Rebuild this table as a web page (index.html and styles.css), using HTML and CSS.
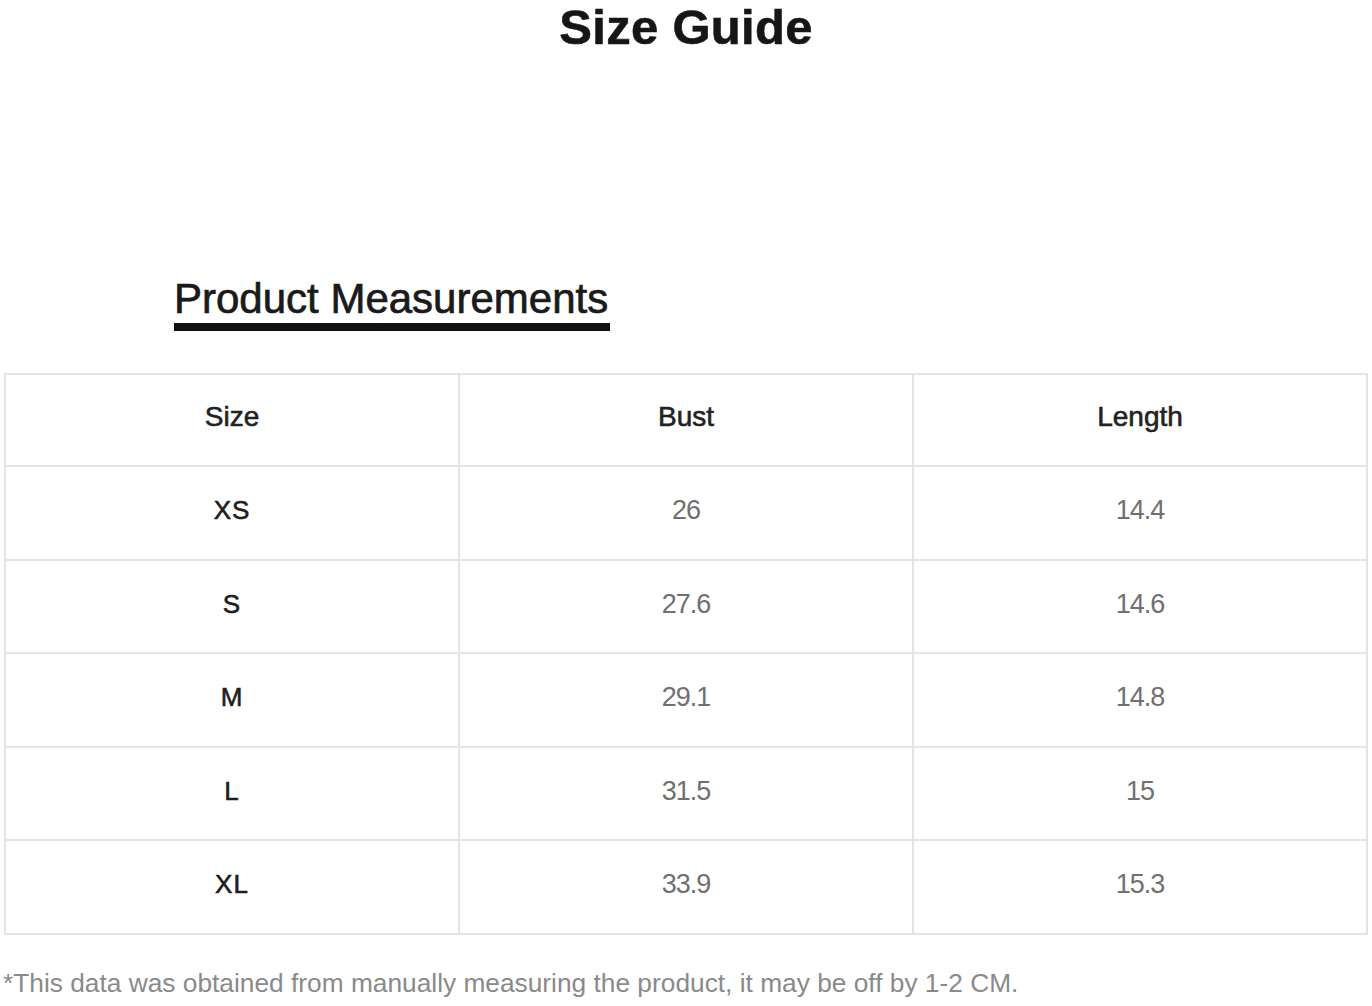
FILE: index.html
```html
<!DOCTYPE html>
<html lang="en">
<head>
<meta charset="utf-8">
<title>Size Guide</title>
<link rel="stylesheet" href="styles.css">
</head>
<body>
<main class="page">
  <h1 class="title">Size Guide</h1>
  <div class="section-head">
    <h2 class="subtitle">Product Measurements</h2>
  </div>
  <table class="sizes">
    <thead>
      <tr><th>Size</th><th>Bust</th><th>Length</th></tr>
    </thead>
    <tbody>
      <tr><td class="size">XS</td><td>26</td><td>14.4</td></tr>
      <tr><td class="size">S</td><td>27.6</td><td>14.6</td></tr>
      <tr><td class="size">M</td><td>29.1</td><td>14.8</td></tr>
      <tr><td class="size">L</td><td>31.5</td><td>15</td></tr>
      <tr><td class="size">XL</td><td>33.9</td><td>15.3</td></tr>
    </tbody>
  </table>
  <p class="note">*This data was obtained from manually measuring the product, it may be off by 1-2 CM.</p>
</main>
</body>
</html>
```

FILE: styles.css
```css
html, body {
  margin: 0;
  padding: 0;
  background: #ffffff;
}

.page {
  width: 1372px;
  font-family: "Liberation Sans", Arial, sans-serif;
}

.title {
  margin: 0;
  text-align: center;
  font-size: 49px;
  line-height: 54px;
  font-weight: 700;
  color: #161616;
  -webkit-text-stroke: 0.6px #161616;
  letter-spacing: 0.3px;
}

.section-head {
  margin-top: 222px;
  padding-left: 174px;
}

.subtitle {
  display: inline-block;
  margin: 0;
  font-size: 42px;
  line-height: 46px;
  font-weight: 400;
  color: #1a1a1a;
  -webkit-text-stroke: 0.7px #1a1a1a;
  padding-bottom: 1px;
  border-bottom: 8px solid #111111;
  padding-right: 2px;
}

.sizes {
  margin-top: 42px;
  margin-left: 4px;
  width: 1364px;
  border-collapse: collapse;
  table-layout: fixed;
}

.sizes th,
.sizes td {
  border: 2px solid #e4e4e4;
  padding: 0;
  text-align: center;
  vertical-align: middle;
  font-size: 27px;
}

.sizes th {
  height: 84px;
  padding-bottom: 6px;
  font-weight: 400;
  color: #222222;
  -webkit-text-stroke: 0.6px #222222;
  font-size: 28px;
}

.sizes td {
  height: 87.5px;
  padding-bottom: 4px;
  color: #707070;
  letter-spacing: -1px;
}

.sizes td.size {
  color: #1e1e1e;
  -webkit-text-stroke: 0.6px #1e1e1e;
  letter-spacing: 1px;
  font-size: 26px;
}

.note {
  margin: 33px 0 0 3px;
  font-size: 26.3px;
  line-height: 30px;
  color: #8a8a8a;
  white-space: nowrap;
}
```
